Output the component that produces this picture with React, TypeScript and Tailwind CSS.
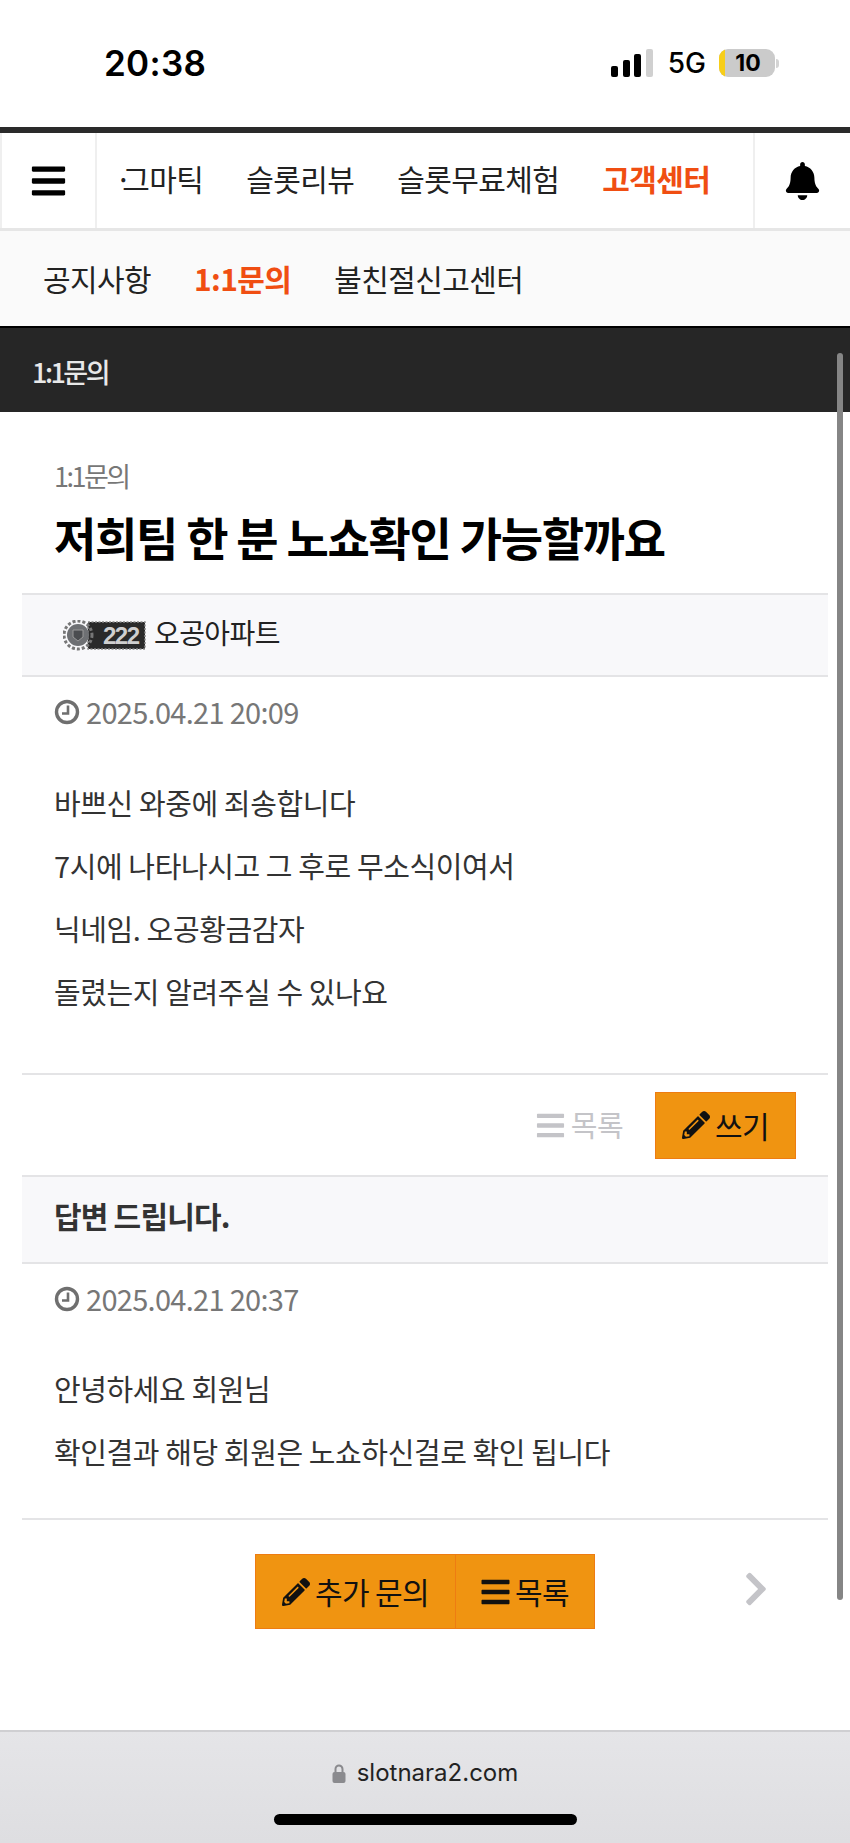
import { FaBars, FaBell, FaChevronRight, FaPencilAlt } from 'react-icons/fa';

const kr = 'font-["Noto_Sans_CJK_KR",sans-serif]';

function StatusBar() {
  return (
    <div className="flex h-[127px] items-start justify-between bg-white pl-[104px] pr-[71px] pt-[41px]">
      <span className='font-["Inter",sans-serif] text-[35px] leading-[44px] font-semibold tracking-[0.3px] text-black'>20:38</span>
      <div className="mt-[8px] flex items-center">
        <div className="flex h-[28px] items-end gap-[4.5px]">
          <span className="h-[11px] w-[7px] rounded-[2px] bg-black" />
          <span className="h-[17px] w-[7px] rounded-[2px] bg-black" />
          <span className="h-[23px] w-[7px] rounded-[2px] bg-black" />
          <span className="h-[28px] w-[7px] rounded-[2px] bg-[#d0d0d0]" />
        </div>
        <span className='ml-[15px] font-["Inter",sans-serif] text-[28px] leading-[28px] font-medium text-black'>5G</span>
        <div className="ml-[13px] flex items-center">
          <div className="flex h-[28px] w-[56px] items-center overflow-hidden rounded-[9px] bg-[#cbcbcb]">
            <span className="h-full w-[6px] bg-[#f7ce1a]" />
            <span className='flex-1 pr-[4px] text-center font-["Inter",sans-serif] text-[23px] leading-[28px] font-bold text-black'>10</span>
          </div>
          <span className="ml-[1px] h-[9px] w-[3px] rounded-r-full bg-[#d4d4d4]" />
        </div>
      </div>
    </div>
  );
}

function MainNav() {
  return (
    <div className="flex h-[104px] border-t-[6px] border-b-[3px] border-t-[#2a2a2a] border-b-[#e6e6e6] bg-white">
      <div className="flex w-[97px] shrink-0 items-center justify-center border-x-2 border-[#efefef] pr-[1px]">
        <FaBars className="h-[38px] w-[35px] text-black" />
      </div>
      <nav className="flex flex-1 items-center gap-[43px] overflow-hidden pb-[4px] pl-[18px] text-[30px] tracking-[-0.6px] text-[#222]">
        <span>
          <span className="tracking-[-9.6px]">·</span>그마틱
        </span>
        <span>슬롯리뷰</span>
        <span>슬롯무료체험</span>
        <span className="font-bold text-[#f04e12]">고객센터</span>
      </nav>
      <div className="flex w-[97px] shrink-0 items-center justify-center border-l-2 border-[#efefef]">
        <FaBell className="h-[38px] w-[37px] text-black" />
      </div>
    </div>
  );
}

function SubNav() {
  return (
    <div className="flex h-[95px] items-center gap-[43px] bg-[#fafafa] pl-[43px] text-[30px] tracking-[-0.6px] text-[#222]">
      <span>공지사항</span>
      <span className="font-bold text-[#f04e12]">1:1문의</span>
      <span>불친절신고센터</span>
    </div>
  );
}

function ClockIcon() {
  return (
    <svg viewBox="0 0 26 26" className="h-[26px] w-[26px] shrink-0 text-[#6f6f6f]" fill="none" stroke="currentColor">
      <circle cx="13" cy="13" r="10.5" strokeWidth="3.4" />
      <path d="M14 6.5V14.5H8" strokeWidth="2.6" />
    </svg>
  );
}

function LevelBadge() {
  return (
    <div className="relative h-[31px] w-[84px] shrink-0">
      <svg viewBox="0 0 84 31" className="absolute inset-0 h-full w-full">
        <rect x="25" y="2" width="57" height="27" fill="#2a2a2a" stroke="#8a8a8a" strokeWidth="1.5" strokeDasharray="2 1.5" />
        <circle cx="15" cy="15" r="14" fill="none" stroke="#777" strokeWidth="3" strokeDasharray="3 2" />
        <circle cx="15" cy="15" r="11" fill="#6e7073" />
        <path d="M10 10H20V17L15 21L10 17Z" fill="#4b4d50" stroke="#999" strokeWidth="1" />
      </svg>
      <span className='absolute top-0 left-[40px] font-["Liberation_Sans",sans-serif] text-[24px] leading-[31px] font-bold tracking-[-1.5px] text-[#cfcfcf]'>222</span>
    </div>
  );
}

function DateRow({ value }: { value: string }) {
  return (
    <div className="flex h-[66px] items-center gap-[6px] pt-[4px] pl-[32px] text-[29px] tracking-[-0.7px] text-[#777]">
      <ClockIcon />
      <span>{value}</span>
    </div>
  );
}

function Orange({ children, className }: { children: React.ReactNode; className: string }) {
  return (
    <span className={`flex items-center justify-center border border-[#ee7c12] bg-[#f09411] text-[30px] tracking-[-0.6px] text-[#111] ${className}`}>
      {children}
    </span>
  );
}

export default function App() {
  return (
    <div className={`relative flex h-[1843px] w-[850px] flex-col overflow-hidden bg-white ${kr}`}>
      <StatusBar />
      <MainNav />
      <SubNav />
      <div className="flex h-[86px] items-center border-t-2 border-black bg-[#262626] pt-[4px] pl-[32px] text-[27px] font-medium tracking-[-2.5px] text-[#e8e8e8]">
        1:1문의
      </div>

      <div className="flex-1 px-[22px]">
        <p className="pt-[44px] pl-[32px] text-[27px] leading-[40px] tracking-[-2.5px] text-[#777]">1:1문의</p>
        <h1 className="mt-[7px] pl-[32px] text-[46px] leading-[66px] font-bold tracking-[-1.3px] text-black">저희팀 한 분 노쇼확인 가능할까요</h1>

        <div className="mt-[24px] flex h-[84px] items-center gap-[7px] border-y-2 border-[#e4e4e6] bg-[#f8f8fa] pl-[41px] text-[28px] tracking-[-0.6px] text-[#222]">
          <LevelBadge />
          <span className="pb-[6px]">오공아파트</span>
        </div>
        <DateRow value="2025.04.21 20:09" />

        <div className="pt-[28px] pl-[32px] text-[29px] leading-[63px] tracking-[-0.4px] text-[#333]">
          <p>바쁘신 와중에 죄송합니다</p>
          <p>7시에 나타나시고 그 후로 무소식이여서</p>
          <p>닉네임. 오공황금감자</p>
          <p>돌렸는지 알려주실 수 있나요</p>
        </div>

        <div className="mt-[50px] flex h-[104px] items-center justify-end gap-[32px] border-y-2 border-[#e4e4e6] pr-[32px]">
          <span className="flex items-center gap-[6px] text-[29px] tracking-[-0.6px] text-[#c4c4c8]">
            <FaBars className="h-[31px] w-[29px]" />
            목록
          </span>
          <Orange className="h-[67px] w-[141px] gap-[5px]">
            <FaPencilAlt className="h-[28px] w-[28px]" />
            쓰기
          </Orange>
        </div>

        <div className="flex h-[87px] items-center border-b-2 border-[#e4e4e6] bg-[#f8f8fa] pb-[8px] pl-[32px] text-[30px] font-bold tracking-[-0.8px] text-[#333]">
          답변 드립니다.
        </div>
        <DateRow value="2025.04.21 20:37" />

        <div className="pt-[27px] pl-[32px] text-[29px] leading-[63px] tracking-[-0.4px] text-[#333]">
          <p>안녕하세요 회원님</p>
          <p>확인결과 해당 회원은 노쇼하신걸로 확인 됩니다</p>
        </div>

        <div className="mt-[35px] flex items-center border-t-2 border-[#e4e4e6] pt-[34px]">
          <div className="ml-[233px] flex">
            <Orange className="h-[75px] w-[201px] gap-[5px]">
              <FaPencilAlt className="h-[28px] w-[28px]" />
              추가 문의
            </Orange>
            <Orange className="h-[75px] w-[139px] gap-[5px] border-l-0">
              <FaBars className="h-[32px] w-[29px]" />
              목록
            </Orange>
          </div>
          <FaChevronRight className="mb-[6px] ml-[149px] h-[38px] w-[24px] text-[#c4c4c8]" />
        </div>
      </div>

      <div className="flex h-[113px] flex-col items-center border-t-2 border-[#cfcfd2] bg-gradient-to-b from-[#e5e5e8] to-[#dedee1]">
        <div className="mt-[26px] flex items-center gap-[11px]">
          <svg viewBox="0 0 14 19" className="h-[19px] w-[14px] text-[#8a8a8e]" fill="currentColor">
            <path d="M2.5 8V5a4.5 4.5 0 0 1 9 0v3h-2V5a2.5 2.5 0 0 0-5 0v3z" />
            <rect x="0.5" y="8" width="13" height="11" rx="2" />
          </svg>
          <span className='font-["Inter",sans-serif] text-[24px] leading-[30px] text-[#222]'>slotnara2.com</span>
        </div>
        <div className="mt-[26px] h-[11px] w-[303px] rounded-full bg-black" />
      </div>

      {/* page scrollbar sits over the content */}
      <div className="absolute top-[353px] left-[837px] h-[1247px] w-[6px] rounded-full bg-[#858585]" />
    </div>
  );
}
